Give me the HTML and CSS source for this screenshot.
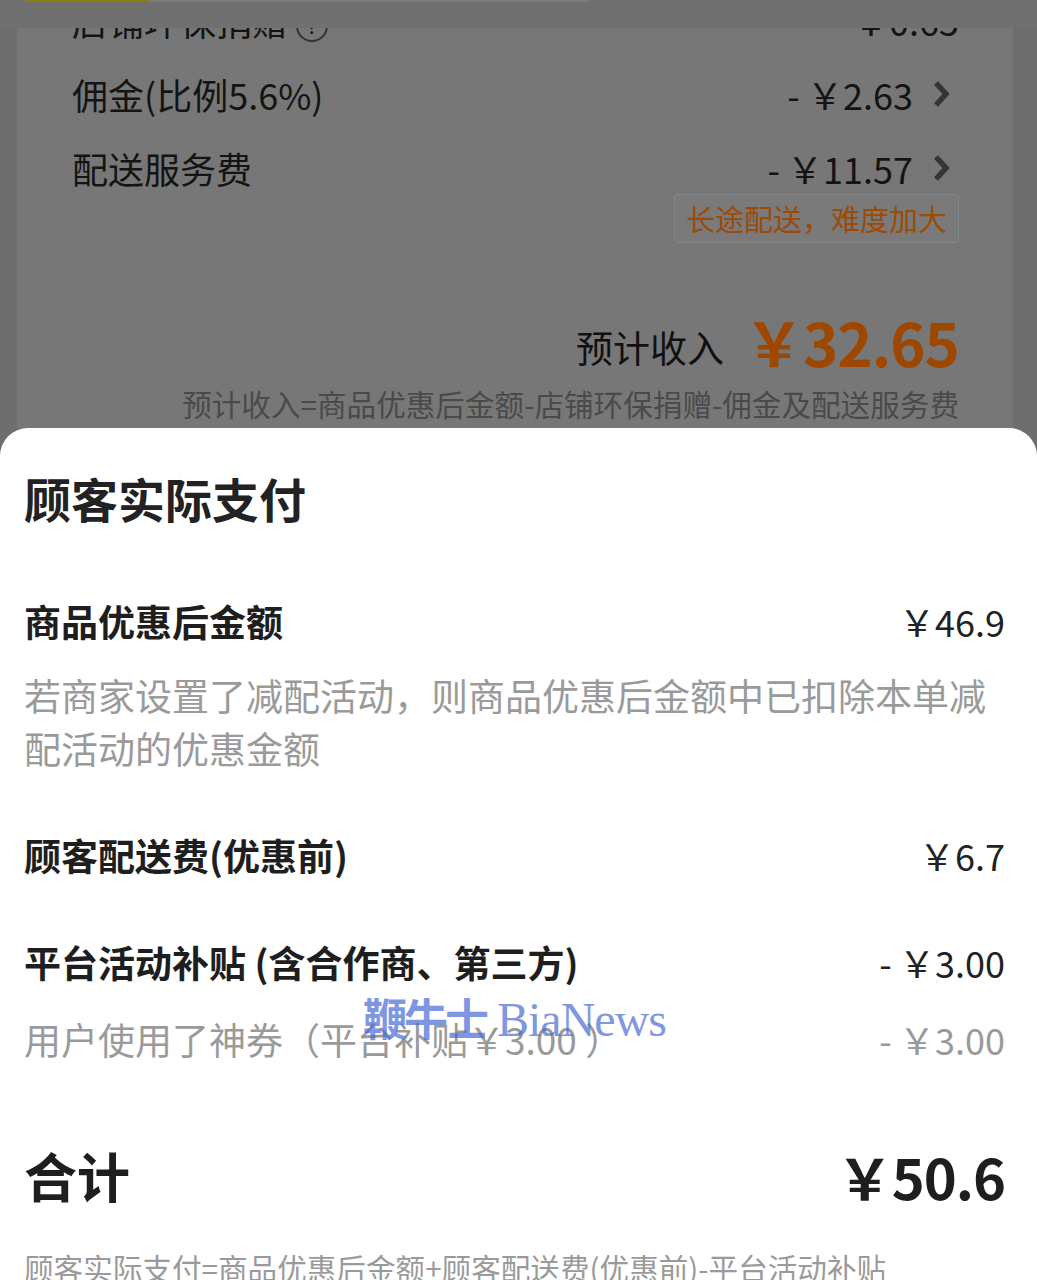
FILE: index.html
```html
<!DOCTYPE html>
<html lang="zh-CN">
<head>
<meta charset="utf-8">
<title>顾客实际支付</title>
<link rel="stylesheet" href="styles.css">
</head>
<body>
<div class="backdrop">
  <div class="card">
    <div class="row">
      <span class="label">店铺环保捐赠 <span class="info">?</span></span>
      <span class="val">￥0.65</span>
    </div>
    <div class="row">
      <span class="label">佣金(比例5.6%)</span>
      <span class="val">-&thinsp;￥2.63<svg class="chev" viewBox="0 0 18 28" width="18" height="28"><polyline points="3,3 13,14 3,25" fill="none" stroke="#353535" stroke-width="5.5"/></svg></span>
    </div>
    <div class="row">
      <span class="label">配送服务费</span>
      <span class="val">-&thinsp;￥11.57<svg class="chev" viewBox="0 0 18 28" width="18" height="28"><polyline points="3,3 13,14 3,25" fill="none" stroke="#353535" stroke-width="5.5"/></svg></span>
    </div>
    <div class="badge">长途配送，难度加大</div>
    <div class="income"><span class="income-label">预计收入</span><span class="income-amt">￥32.65</span></div>
    <div class="income-formula">预计收入=商品优惠后金额-店铺环保捐赠-佣金及配送服务费</div>
  </div>
  <div class="topbar"><span class="tab-ind"></span><span class="tab-light"></span></div>
</div>
<div class="sheet">
  <h1 class="title">顾客实际支付</h1>
  <div class="item first">
    <span class="item-label">商品优惠后金额</span>
    <span class="item-val">￥46.9</span>
  </div>
  <p class="desc">若商家设置了减配活动，则商品优惠后金额中已扣除本单减配活动的优惠金额</p>
  <div class="item gap-l">
    <span class="item-label">顾客配送费(优惠前)</span>
    <span class="item-val">￥6.7</span>
  </div>
  <div class="item gap-l">
    <span class="item-label">平台活动补贴 (含合作商、第三方)</span>
    <span class="item-val">-&thinsp;￥3.00</span>
  </div>
  <div class="item sub">
    <span class="sub-label">用户使用了神券（平台补贴￥3.00 ）</span>
    <span class="sub-val">-&thinsp;￥3.00</span>
  </div>
  <div class="total">
    <span class="total-label">合计</span>
    <span class="total-val">￥50.6</span>
  </div>
  <div class="formula">顾客实际支付=商品优惠后金额+顾客配送费(优惠前)-平台活动补贴</div>
  <div class="watermark"><span class="wm-cn">鞭牛士</span> BiaNews</div>
</div>
</body>
</html>
```
FILE: styles.css
```css
html, body {
  margin: 0;
  padding: 0;
}
body {
  width: 1037px;
  height: 1280px;
  overflow: hidden;
  background: #6e6e6e;
  font-family: "Noto Sans CJK SC", "Noto Sans", sans-serif;
}
.backdrop {
  position: relative;
  height: 428px;
  overflow: hidden;
  background: #6e6e6e;
}
.topbar {
  position: absolute;
  left: 0;
  top: 0;
  width: 100%;
  height: 28px;
  background: #707070;
}
.tab-ind {
  position: absolute;
  left: 25px;
  top: 0;
  width: 124px;
  height: 2px;
  background: #8f7c10;
}
.tab-light {
  position: absolute;
  left: 149px;
  top: 0;
  width: 440px;
  height: 2px;
  background: #7c7c7c;
}
.card {
  margin: -5px 24px 0 17px;
  padding: 0 54px 0 55px;
  height: 440px;
  background: #777777;
  display: flex;
  flex-direction: column;
}
.row {
  display: flex;
  justify-content: space-between;
  align-items: center;
  height: 50px;
  margin-bottom: 24px;
  font-size: 36px;
  color: #141414;
}
.row:nth-child(3) {
  margin-bottom: 1px;
}
.info {
  display: inline-block;
  width: 28px;
  height: 28px;
  border: 2px solid #333;
  border-radius: 50%;
  font-size: 20px;
  line-height: 28px;
  text-align: center;
  vertical-align: middle;
}
.val {
  display: flex;
  align-items: center;
}
.chev {
  margin-left: 20px;
  margin-right: 8px;
}
.badge {
  align-self: flex-end;
  height: 47px;
  line-height: 47px;
  padding: 0 11px;
  border: 1px solid #868686;
  border-radius: 4px;
  background: #7a7a7a;
  color: #9c4a06;
  font-size: 29px;
}
.income {
  margin-top: 62px;
  height: 70px;
  display: flex;
  justify-content: flex-end;
  align-items: center;
}
.income-label {
  font-size: 37px;
  color: #111;
  margin-top: 14px;
}
.income-amt {
  margin-left: 20px;
  font-size: 60px;
  font-weight: 700;
  color: #9e4700;
  letter-spacing: -1px;
}
.income-formula {
  margin-top: 9px;
  text-align: right;
  font-size: 29.6px;
  line-height: 40px;
  color: #4a4a4a;
  white-space: nowrap;
}
.sheet {
  position: relative;
  background: #fff;
  border-radius: 28px 28px 0 0;
  padding: 40px 32px 0 24px;
  height: 900px;
  color: #222;
}
.title {
  margin: 0;
  font-size: 47px;
  line-height: 60px;
  font-weight: 700;
  color: #222;
}
.item {
  display: flex;
  justify-content: space-between;
  align-items: center;
  height: 50px;
}
.item.first {
  margin-top: 68px;
}
.item.gap-l {
  margin-top: 55px;
}
.item.gap-l + .item.gap-l {
  margin-top: 57px;
}
.item-label {
  font-size: 37px;
  font-weight: 700;
  color: #1e1e1e;
}
.item-val {
  font-size: 36px;
  color: #222;
}
.desc {
  margin: 23px 0 0;
  font-size: 37px;
  line-height: 53px;
  color: #9a9a9a;
}
.item.sub {
  margin-top: 27px;
}
.sub-label {
  font-size: 37px;
  color: #9a9a9a;
}
.sub-val {
  font-size: 36px;
  color: #9a9a9a;
}
.total {
  margin-top: 76px;
  display: flex;
  justify-content: space-between;
  align-items: center;
  height: 70px;
}
.total-label {
  font-size: 53px;
  font-weight: 700;
  color: #1e1e1e;
}
.total-val {
  font-size: 56px;
  font-weight: 700;
  color: #1e1e1e;
  letter-spacing: -1px;
}
.formula {
  margin-top: 38px;
  font-size: 29.6px;
  line-height: 40px;
  color: #9a9a9a;
  white-space: nowrap;
}
.watermark {
  position: absolute;
  left: 363px;
  top: 564px;
  font-family: "Liberation Serif", "Noto Sans CJK SC", serif;
  font-size: 48px;
  line-height: 50px;
  color: rgba(70, 105, 215, 0.7);
  white-space: nowrap;
  letter-spacing: -1px;
}
.wm-cn {
  font-family: "Noto Sans CJK SC", serif;
  font-weight: 700;
  font-size: 44px;
  letter-spacing: -3px;
}
```
